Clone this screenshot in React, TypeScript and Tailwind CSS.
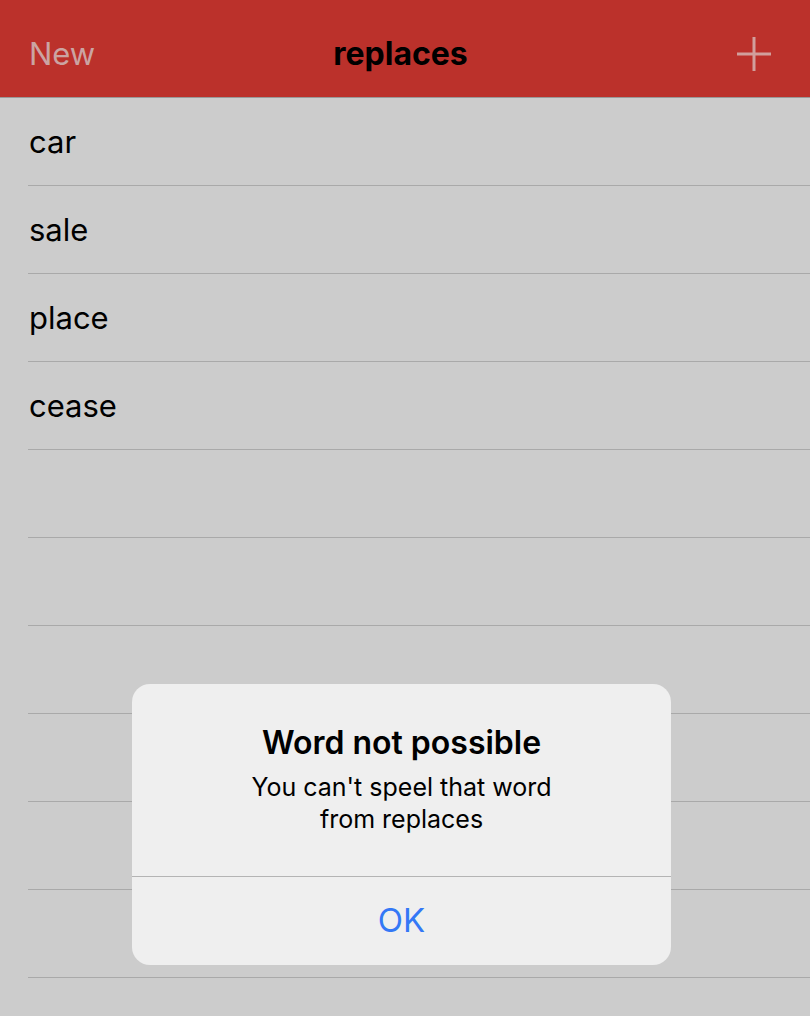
const words = ["car", "sale", "place", "cease", "", "", "", "", "", "", ""];

const PlusIcon = () => (
  <svg width="36" height="36" viewBox="0 0 36 36" className="text-[#d19f9c]">
    <path d="M18 1v34M1 18h34" stroke="currentColor" strokeWidth="3" />
  </svg>
);

const Alert = ({ title, message }: { title: string; message: string[] }) => (
  <div className="absolute left-[132px] top-[684px] w-[539px] overflow-hidden rounded-[18px] bg-[#efefef] font-['Inter',sans-serif] text-black">
    <div className="flex flex-col items-center border-b border-[#b4b4b4] px-6 pt-[41px] pb-[41px]">
      <h2 className="text-[32px] leading-[36px] font-semibold">{title}</h2>
      <p className="mt-[10px] text-center text-[25px] leading-[32px]">
        {message.map((line) => (
          <span key={line} className="block">
            {line}
          </span>
        ))}
      </p>
    </div>
    <button className="flex h-[88px] w-full items-center justify-center text-[33px] text-[#3478f6]">
      OK
    </button>
  </div>
);

const App = () => {
  return (
    <div className="relative h-[1016px] w-[810px] overflow-hidden bg-[#cccccc] font-['Inter',sans-serif]">
      <header className="flex h-[98px] items-center justify-between border-b border-[#999999] bg-[#bb312b] pt-[11px] pl-[29px] pr-[38px]">
        <span className="w-[100px] text-[31px] text-[#cba4a2]">New</span>
        <h1 className="text-[32px] font-bold text-black">replaces</h1>
        <div className="flex w-[100px] justify-end">
          <PlusIcon />
        </div>
      </header>
      <ul>
        {words.map((word, i) => (
          <li key={i} className="ml-[28px] flex h-[88px] items-center border-b border-[#a9a9a9] pt-[2px]">
            <span className="pl-px text-[31px] text-black">{word}</span>
          </li>
        ))}
      </ul>
      <Alert
        title="Word not possible"
        message={["You can't speel that word", "from replaces"]}
      />
    </div>
  );
};

export default App;
